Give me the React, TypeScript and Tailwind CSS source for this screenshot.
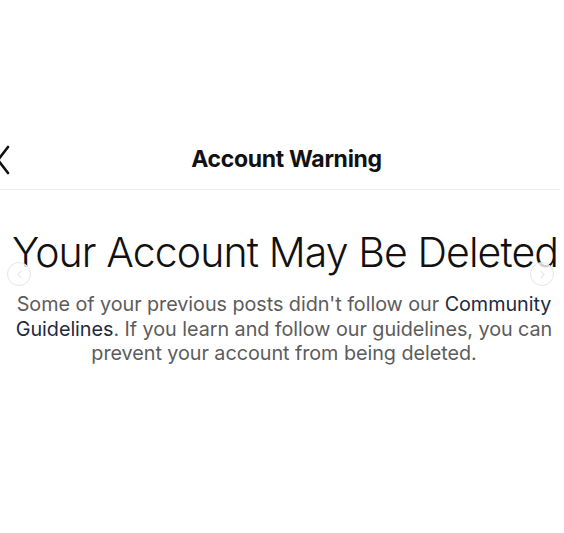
import { ChevronLeft, ChevronRight } from 'lucide-react';

export default function App() {
  return (
    <div className="w-[564px] h-[533px] bg-white overflow-hidden font-['Inter','Liberation_Sans',sans-serif]">
      {/* Nav bar */}
      <div className="mt-[136px] h-[54px] relative flex items-center justify-center border-b border-[#ececec] mr-[4px]">
        <svg className="absolute left-[-4px] top-[9px]" width="14" height="30" viewBox="0 0 14 30" fill="none">
          <path d="M12 2 L2 15 L12 28" stroke="#111" strokeWidth="2.6" strokeLinecap="round" strokeLinejoin="round" />
        </svg>
        <h1 className="text-[23px] font-bold text-[#111] tracking-[-0.3px] -mt-[6px] ml-[13px]">Account Warning</h1>
      </div>

      {/* Content */}
      <div className="relative pt-[37px] flex flex-col items-center">
        <h2 className="text-[41px] font-light text-[#111] leading-[50px] tracking-[-0.9px] whitespace-nowrap ml-[6px]">
          Your Account May Be Deleted
        </h2>
        <p className="mt-[15px] pl-[8px] pr-[4px] text-center text-[19.8px] leading-[24.5px] tracking-[-0.05px] text-[#5c5c5c]">
          Some of your previous posts didn't follow our <span className="text-[#1d2b3d]">Community Guidelines</span>. If
          you learn and follow our guidelines, you can prevent your account from being deleted.
        </p>

        <div className="absolute left-[7px] top-[72px] w-[24px] h-[24px] rounded-full border border-[#e6e6e6] bg-white/80 flex items-center justify-center">
          <ChevronLeft size={13} className="text-[#cfcfcf]" strokeWidth={1.5} />
        </div>
        <div className="absolute right-[10px] top-[72px] w-[24px] h-[24px] rounded-full border border-[#e6e6e6] bg-white/80 flex items-center justify-center">
          <ChevronRight size={13} className="text-[#cfcfcf]" strokeWidth={1.5} />
        </div>
      </div>
    </div>
  );
}
